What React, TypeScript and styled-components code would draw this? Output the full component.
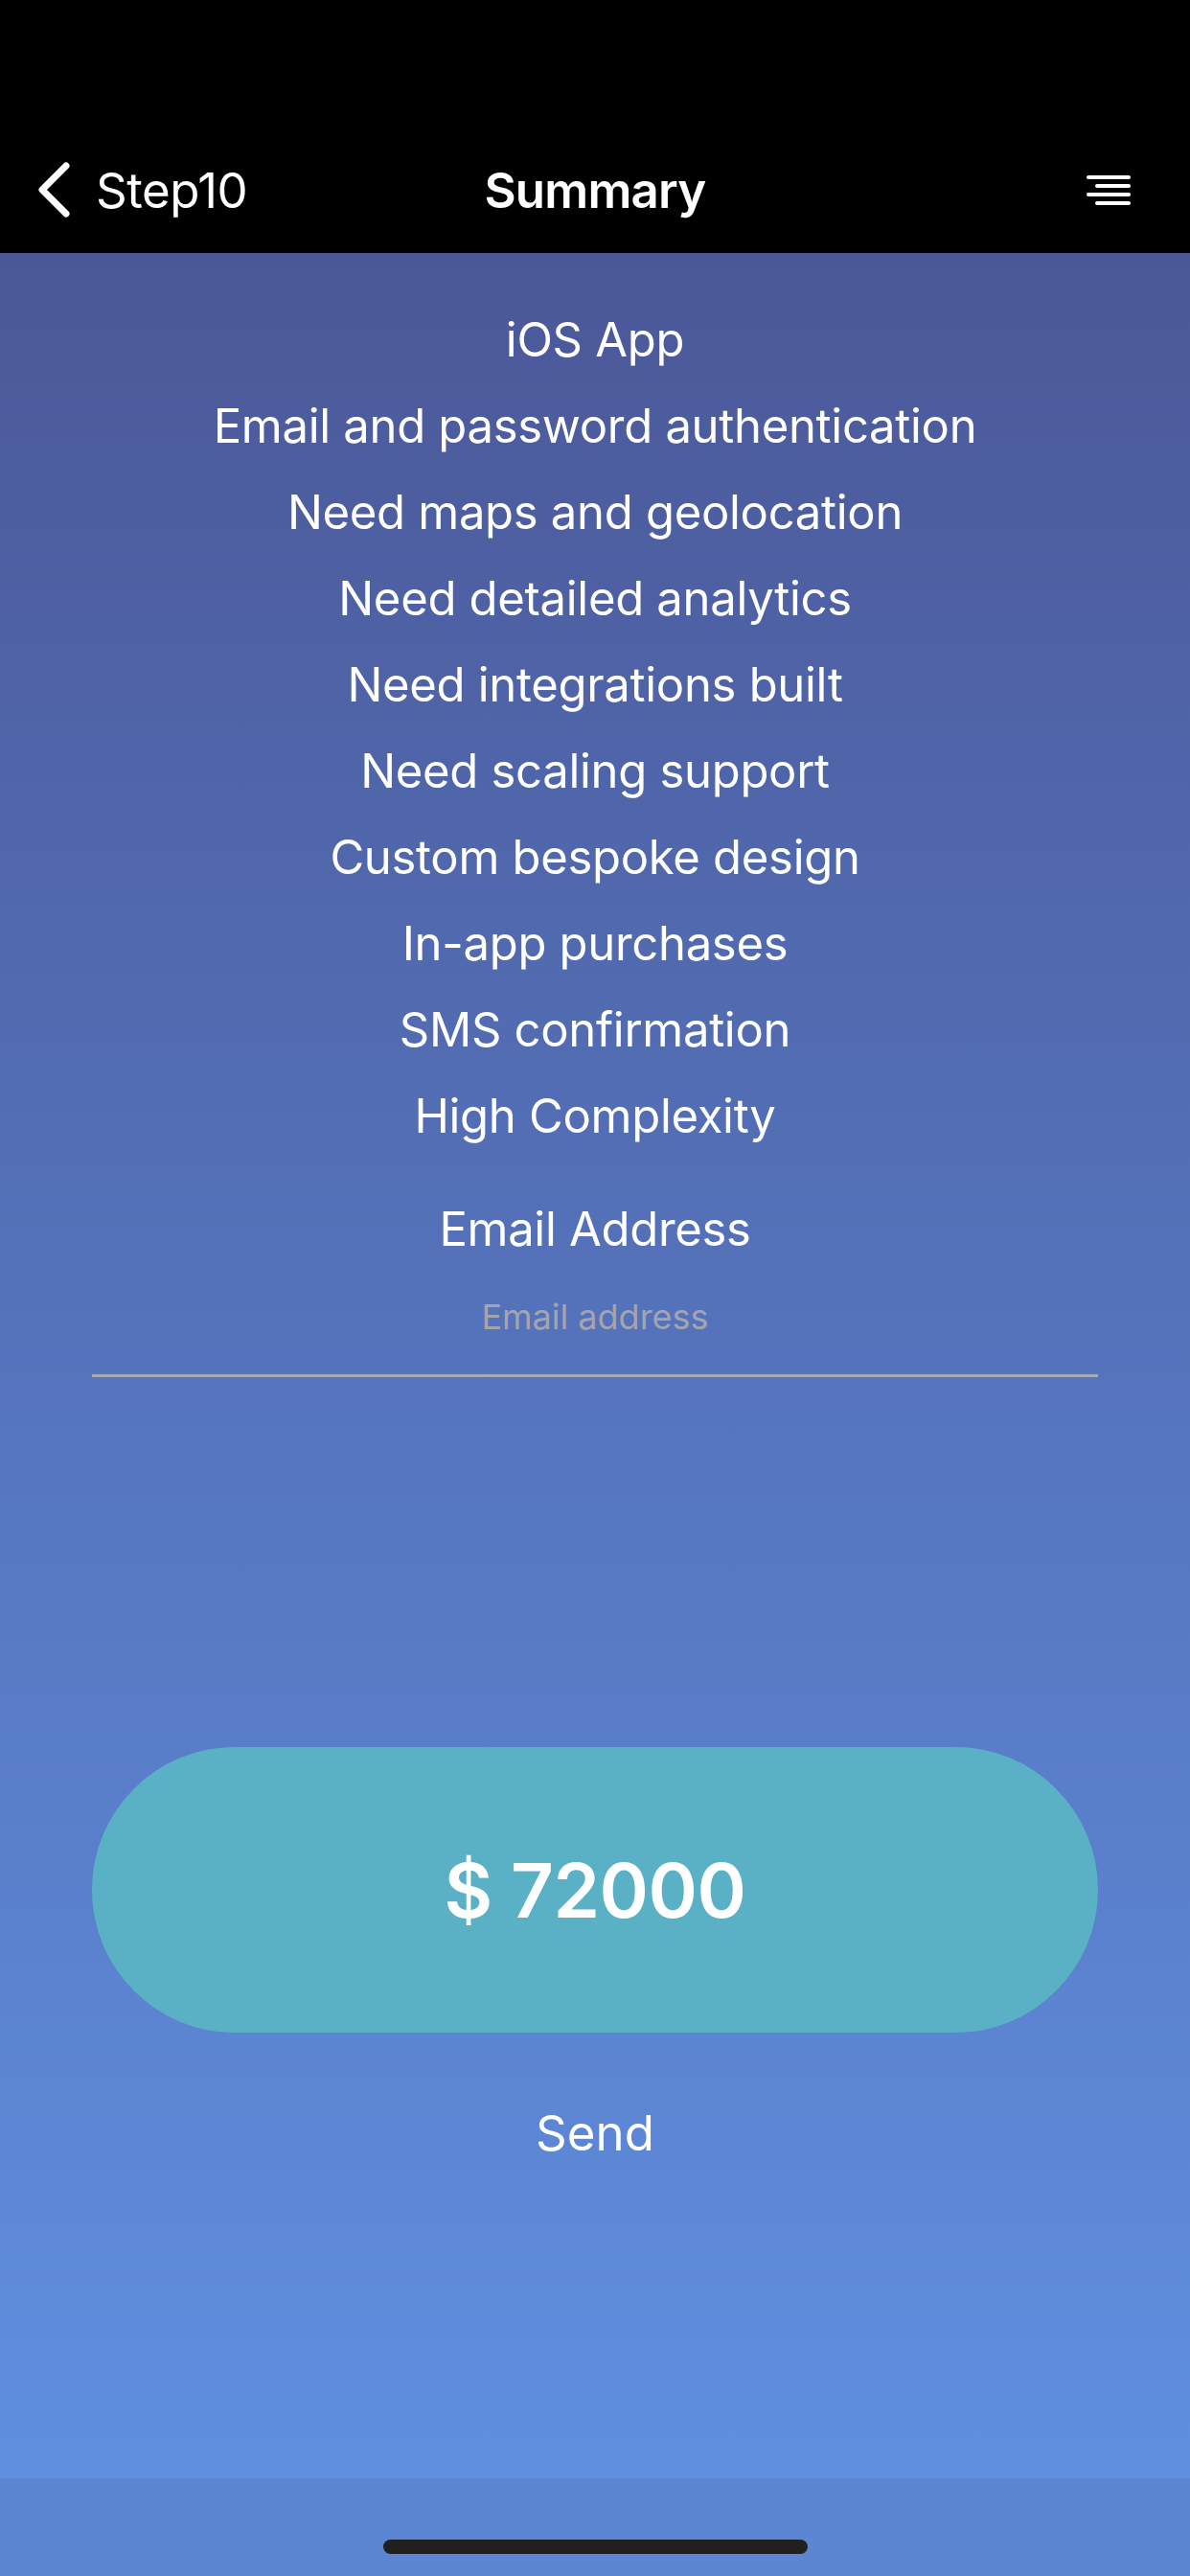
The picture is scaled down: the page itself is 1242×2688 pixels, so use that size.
import React from "react";
import styled, { createGlobalStyle } from "styled-components";

const GlobalStyle = createGlobalStyle`
  html, body {
    margin: 0;
    padding: 0;
    background: #000;
  }
  body {
    font-family: Inter, "Noto Sans", "Liberation Sans", sans-serif;
    -webkit-font-smoothing: antialiased;
  }
  * {
    box-sizing: border-box;
  }
`;

const Page = styled.div`
  width: 1242px;
  min-height: 2688px;
  display: flex;
  flex-direction: column;
  color: #fff;
`;

const Header = styled.header`
  background: #000;
  padding-top: 132px;
`;

const NavBar = styled.nav`
  height: 132px;
  display: grid;
  grid-template-columns: 1fr auto 1fr;
  align-items: center;
  padding: 0 38px;
`;

const BackButton = styled.button`
  display: flex;
  align-items: center;
  gap: 26px;
  background: none;
  border: 0;
  padding: 0;
  color: #fff;
  font: inherit;
  font-size: 51px;
  letter-spacing: -0.5px;
  justify-self: start;
`;

const Title = styled.h1`
  margin: 0;
  font-size: 51px;
  font-weight: 600;
  letter-spacing: -0.8px;
`;

const MenuButton = styled.button`
  justify-self: end;
  margin-right: 24px;
  background: none;
  border: 0;
  padding: 0;
  display: flex;
`;

const Content = styled.main`
  flex: 1;
  display: flex;
  flex-direction: column;
  align-items: center;
  background: linear-gradient(180deg, #4b5898 0%, #5471b9 45%, #608fe0 100%);
  padding: 46px 96px 0;
`;

const Features = styled.ul`
  list-style: none;
  margin: 0;
  padding: 0;
  text-align: center;
`;

const Feature = styled.li`
  font-size: 49px;
  line-height: 90px;
  letter-spacing: -0.3px;
`;

const FieldLabel = styled.label`
  margin-top: 28px;
  font-size: 49px;
  line-height: 90px;
  letter-spacing: -0.3px;
`;

const EmailInput = styled.input`
  width: 100%;
  height: 109px;
  padding: 0 0 15px;
  background: transparent;
  border: 0;
  border-bottom: 3px solid #a9a9b0;
  outline: none;
  text-align: center;
  color: #fff;
  font: inherit;
  font-size: 36px;

  &::placeholder {
    color: #a4a4ac;
  }
`;

const PriceButton = styled.button`
  margin-top: 386px;
  width: 100%;
  height: 298px;
  border: 0;
  border-radius: 149px;
  background: #5ab1c5;
  color: #fff;
  font: inherit;
  font-size: 78px;
  font-weight: 600;
  letter-spacing: -0.5px;
`;

const SendButton = styled.button`
  margin-top: 60px;
  background: none;
  border: 0;
  padding: 0;
  color: #fff;
  font: inherit;
  font-size: 51px;
  line-height: 90px;
`;

const HomeArea = styled.footer`
  height: 102px;
  background: #5c85d4;
  display: flex;
  justify-content: center;
  padding-top: 64px;
`;

const HomeIndicator = styled.div`
  width: 443px;
  height: 15px;
  border-radius: 8px;
  background: #202020;
`;

const features = [
  "iOS App",
  "Email and password authentication",
  "Need maps and geolocation",
  "Need detailed analytics",
  "Need integrations built",
  "Need scaling support",
  "Custom bespoke design",
  "In-app purchases",
  "SMS confirmation",
  "High Complexity",
];

const Chevron = () => (
  <svg width="36" height="58" viewBox="0 0 36 58" fill="none">
    <path
      d="M31 4 L6 29 L31 54"
      stroke="#fff"
      strokeWidth="7"
      strokeLinecap="round"
      strokeLinejoin="round"
    />
  </svg>
);

const MenuIcon = () => (
  <svg width="46" height="32" viewBox="0 0 46 32" fill="none">
    <g stroke="#fff" strokeWidth="4" strokeLinecap="round">
      <line x1="2" y1="3" x2="44" y2="3" />
      <line x1="11" y1="12" x2="44" y2="12" />
      <line x1="2" y1="21" x2="44" y2="21" />
      <line x1="11" y1="30" x2="44" y2="30" />
    </g>
  </svg>
);

const App: React.FC = () => {
  return (
    <Page>
      <GlobalStyle />
      <Header>
        <NavBar>
          <BackButton>
            <Chevron />
            Step10
          </BackButton>
          <Title>Summary</Title>
          <MenuButton aria-label="Menu">
            <MenuIcon />
          </MenuButton>
        </NavBar>
      </Header>
      <Content>
        <Features>
          {features.map((item) => (
            <Feature key={item}>{item}</Feature>
          ))}
        </Features>
        <FieldLabel htmlFor="email">Email Address</FieldLabel>
        <EmailInput id="email" type="email" placeholder="Email address" />
        <PriceButton>$ 72000</PriceButton>
        <SendButton>Send</SendButton>
      </Content>
      <HomeArea>
        <HomeIndicator />
      </HomeArea>
    </Page>
  );
};

export default App;
